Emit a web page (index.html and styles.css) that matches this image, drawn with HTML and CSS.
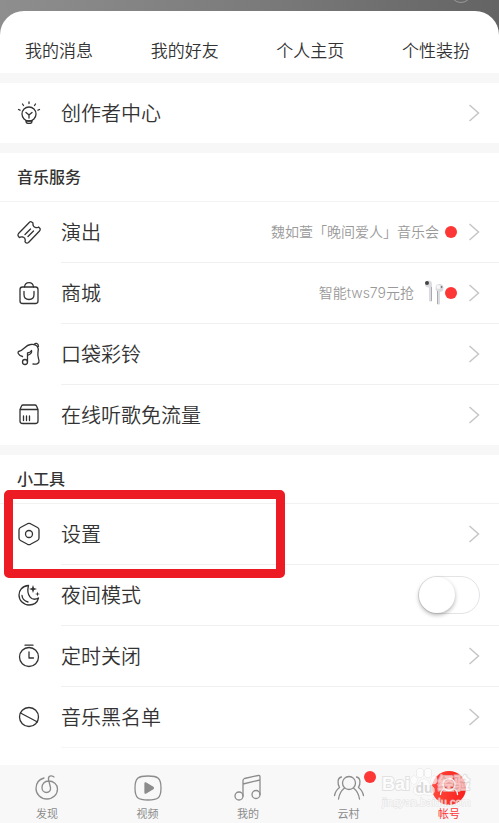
FILE: index.html
```html
<!DOCTYPE html>
<html lang="zh-CN">
<head>
<meta charset="utf-8">
<meta name="viewport" content="width=device-width, initial-scale=1">
<title>帐号</title>
<link rel="stylesheet" href="styles.css">
</head>
<body>
<svg width="0" height="0" class="defs" aria-hidden="true">
  <symbol id="chevron" viewBox="0 0 12 20"><path d="M1.500 2 10.500 10 1.500 18"/></symbol>
</svg>
<div class="screen">
  <span class="ring"></span>
  <main class="sheet">
    <nav class="tabs">
      <a href="#messages">我的消息</a>
      <a href="#friends">我的好友</a>
      <a href="#home">个人主页</a>
      <a href="#dress">个性装扮</a>
    </nav>

    <section class="group">
      <ul class="rows">
        <li class="row">
          <svg class="icon" viewBox="0 0 24 24"><circle cx="12" cy="14" r="7"/><path d="M9 20.500v1q0 2 3 2t3-2v-1M9 21h6M12 18v-3.500M9 12.500l3 2.500 3-2.500M12 2v1.500M5.500 4l1 1.500M18.500 4l-1 1.500M1.500 9.500l1.500.7M22.500 9.500l-1.500.7"/></svg>
          <a class="body" href="#creator"><span class="label">创作者中心</span><svg class="chevron"><use href="#chevron"/></svg></a>
        </li>
      </ul>
    </section>

    <section class="group">
      <h2>音乐服务</h2>
      <ul class="rows">
        <li class="row">
          <svg class="icon" viewBox="0 0 24 24"><path d="M1.500 13.500 12.500 2.200Q13.500 1 15 2.200L16 3Q15.500 6.500 18.500 7.500 21 8 21.500 7L23 8.500Q23.500 10 22.500 11L11.500 22.500Q10 23.700 8.500 22.500L8 21.500Q9 18 6 17 3.500 16.500 2.500 17.500L1.500 16.500Q.5 15 1.500 13.500ZM8 14.500l5.500-5.500M11 16.500l5.500-5.500"/></svg>
          <a class="body" href="#shows"><span class="label">演出</span><span class="note">魏如萱「晚间爱人」音乐会</span><i class="dot"></i><svg class="chevron"><use href="#chevron"/></svg></a>
        </li>
        <li class="row">
          <svg class="icon" viewBox="0 0 24 24"><rect x="3" y="6" width="18" height="16.500" rx="2.500"/><path d="M7.500 6Q8 1.700 12 1.700T16.500 6M7 10.500v3q0 5 5 5t5-5v-3"/></svg>
          <a class="body" href="#mall"><span class="label">商城</span><span class="note">智能tws79元抢</span>
            <svg class="pods" viewBox="0 0 20 26"><g fill="#dcdce0"><path d="M5 5h3v16q-1.500 1.500-3 0ZM13 9h3v15q-1.500 1.500-3 0Z"/><circle cx="4.500" cy="4" r="3.500"/><circle cx="15.500" cy="8" r="4"/></g><path fill="#aaaab0" d="M7 7h1v14H7ZM13 11h1v13h-1Z"/><circle cx="3" cy="3" r="2" fill="#444"/><circle cx="17.500" cy="7" r="1" fill="#777"/><circle cx="14.500" cy="7" r="2" fill="#f7f7f9"/></svg>
            <i class="dot"></i><svg class="chevron"><use href="#chevron"/></svg></a>
        </li>
        <li class="row">
          <svg class="icon" viewBox="0 0 24 24"><path d="M5.500 14.500C1 13.500.5 10 1.500 9.500 7 8.500 8 3 13.500 2.500 20 1.500 22 5.500 21 10c-.8 4 .5 6 1 8.500.5 3-2.500 4-6 3.500M17 2.500c1-2 4.500-1.500 4.500 2M10.500 19.500v-8.500q3-.5 4-2.500 1 3-4 5"/><circle cx="8" cy="20" r="2.500"/></svg>
          <a class="body" href="#ringtone"><span class="label">口袋彩铃</span><svg class="chevron"><use href="#chevron"/></svg></a>
        </li>
        <li class="row">
          <svg class="icon" viewBox="0 0 24 24"><path d="M3 7.500 4.500 4Q5 3 6 3h12q1 0 1.500 1L21 7.500v11.500q0 2.500-2.500 2.500h-13Q3 21.500 3 19ZM3 7.500h18M6.500 14v4.500M9.500 14v4.500M12.500 14v4.500"/></svg>
          <a class="body" href="#data"><span class="label">在线听歌免流量</span><svg class="chevron"><use href="#chevron"/></svg></a>
        </li>
      </ul>
    </section>

    <section class="group tools">
      <h2>小工具</h2>
      <ul class="rows">
        <li class="row marked">
          <svg class="icon" viewBox="0 0 24 24"><path d="M10.500 1.700Q12 1 13.500 1.700L20.500 5.500Q22 6.300 22 8v8q0 1.700-1.500 2.500l-7 3.800q-1.500.7-3 0l-7-3.800Q2 17.700 2 16V8q0-1.700 1.500-2.500Z"/><circle cx="12" cy="12" r="3.500"/></svg>
          <a class="body" href="#settings"><span class="label">设置</span><svg class="chevron"><use href="#chevron"/></svg></a>
        </li>
        <li class="row">
          <svg class="icon" viewBox="0 0 24 24"><path d="M11.500 2.500C5 3 2 7.500 2 12c0 5.500 4.500 10 10 10 5 0 8.500-3 9.500-7-7 4-12.500-3-10-12.500ZM5 12.500q.5 5 6 6.500"/><path class="solid" d="m16 2 1 3 3 1-3 1-1 3-1-3-3-1 3-1ZM20.500 8.500l.6 1.900 1.900.6-1.900.6-.6 1.900-.6-1.900-1.900-.6 1.900-.6Z"/></svg>
          <div class="body"><label class="label" for="night">夜间模式</label><input class="switch" type="checkbox" id="night"></div>
        </li>
        <li class="row">
          <svg class="icon" viewBox="0 0 24 24"><circle cx="12" cy="13" r="9.500"/><path d="M8 1.200h8M12 8v6h4.500"/></svg>
          <a class="body" href="#timer"><span class="label">定时关闭</span><svg class="chevron"><use href="#chevron"/></svg></a>
        </li>
        <li class="row">
          <svg class="icon" viewBox="0 0 24 24"><circle cx="12" cy="12" r="9.500"/><path d="m3.500 8 17 9"/></svg>
          <a class="body" href="#blacklist"><span class="label">音乐黑名单</span><svg class="chevron"><use href="#chevron"/></svg></a>
        </li>
      </ul>
    </section>
  </main>

  <nav class="bar">
    <a href="#discover"><svg viewBox="0 0 34 34"><path d="M14 7C8.500 8.500 6 13 6 17.500 6 23.500 11 28 17 28s10.500-4.500 10.500-10c0-4.500-4-8-9-8-4 0-6.500 3-6.500 6.500 0 3 2 5 4.500 5s4.500-2 4-5L18.500 8.500C18 5 21 4 24 6"/></svg>发现</a>
    <a href="#video"><svg viewBox="0 0 34 34"><path d="M17 5c10 0 13 2 13 12s-3 12-13 12S4 27 4 17 7 5 17 5Z"/><path class="fill" d="M14 12.500v9q0 1 1 .5l7-4.300q.8-.7 0-1.400L15 12q-1-.5-1 .5Z"/></svg>视频</a>
    <a href="#mine"><svg viewBox="0 0 34 34"><circle cx="8" cy="25" r="4"/><circle cx="25" cy="23.500" r="4"/><path d="M12 25V9.500Q12 8 13.500 7.500L27 4.500q2-.5 2 1.500v17.500M12 13l17-4"/></svg>我的</a>
    <a href="#village"><svg viewBox="0 0 34 34"><circle cx="17" cy="12" r="6.500"/><path d="M12.500 17q-5 4-6 11M21.500 17q5 4 6 11M9.500 6C5 7 5.500 13 7.500 16.500q-4 3-5 8M24.500 6c4.500 1 4 7 2 10.500q4 3 5 8"/></svg>云村<i class="dot"></i></a>
    <a href="#account" class="active"><svg viewBox="0 0 34 34"><defs><linearGradient id="red" x1="0" x2="1"><stop stop-color="#ff4a3c"/><stop offset="1" stop-color="#fa1e1c"/></linearGradient></defs><circle class="disc" cx="17" cy="17" r="17"/><circle class="line" cx="17" cy="13.500" r="6"/><path class="line" d="M12.500 17.500q-4 2-4 6M21.500 17.500q4 2 4 6"/></svg>帐号</a>
    <div class="watermark">
      <div class="brand"><span>Bai</span><svg viewBox="0 0 28 28"><ellipse cx="4" cy="12" rx="3" ry="4"/><ellipse cx="10" cy="5" rx="3.500" ry="4.500"/><ellipse cx="18" cy="5" rx="3.500" ry="4.500"/><ellipse cx="24" cy="12" rx="3" ry="4"/><path d="M14 11q3 0 5 4l5 5q2 6-4 7-6-1-12 0-6-1-4-7l5-5q2-4 5-4Z"/><text x="14" y="25" text-anchor="middle">du</text></svg><span class="cn">经验</span></div>
      <div class="domain">jingyan.baidu.com</div>
    </div>
  </nav>
</div>
</body>
</html>
```
FILE: styles.css
```css
*, *::before, *::after { box-sizing: border-box; }

body {
  margin: 0;
  color: #333;
  font-family: Inter, "Noto Sans CJK SC", sans-serif;
}

a { color: inherit; text-decoration: none; }
ul { margin: 0; padding: 0; list-style: none; }
.defs { position: absolute; }

.screen {
  position: relative;
  display: flex;
  flex-direction: column;
  min-height: 100vh;
  padding-top: 11px;
  background: linear-gradient(100deg, #8e8e8e, #7b7b7b 50%, #636363) no-repeat 0 0 / 100% 60px, #fff;
  overflow: hidden;
}

.ring {
  position: absolute;
  top: -19px;
  right: 27px;
  width: 22px;
  height: 22px;
  border: 1px solid #999;
  border-radius: 50%;
}

.sheet {
  position: relative;
  flex: 1;
  background: #fff;
  border-radius: 24px 24px 0 0;
}

.tabs {
  display: flex;
  justify-content: space-between;
  align-items: center;
  height: 62px;
  padding: 14px 29px 0 25px;
  font-size: 17px;
  font-weight: 350;
}

.group { border-top: 10px solid #f7f7f7; }

h2 {
  margin: 0;
  height: 49px;
  padding-left: 17px;
  border-bottom: 1px solid #f2f2f2;
  font-size: 16px;
  font-weight: 500;
  line-height: 49px;
}

.row {
  position: relative;
  display: flex;
  align-items: center;
  gap: 20px;
  padding-left: 17px;
}

.icon {
  width: 24px;
  height: 24px;
  margin-bottom: 2px;
  fill: none;
  stroke: #333;
  stroke-width: 1.3;
  stroke-linecap: round;
  stroke-linejoin: round;
}

.icon .solid { fill: #333; stroke: none; }

.body {
  flex: 1;
  display: flex;
  align-items: center;
  height: 61px;
  padding-right: 19px;
  border-bottom: 1px solid #f0f0f0;
}

.row:last-child .body { height: 60px; border-bottom: 0; }
.tools .row:last-child .body { height: 61px; border-bottom: 1px solid #f6f6f6; }

.label {
  margin-right: auto;
  padding-bottom: 2px;
  font-size: 20px;
  font-weight: 350;
}

.note {
  padding-bottom: 2px;
  color: #999;
  font-size: 14px;
  font-weight: 350;
}

.dot {
  width: 12px;
  height: 12px;
  margin-left: 6px;
  border-radius: 50%;
  background: #fd3636;
}

.pods { width: 20px; height: 26px; margin-left: 10px; }
.pods + .dot { margin-left: 1px; }

.chevron {
  width: 12px;
  height: 20px;
  margin-left: 11px;
  fill: none;
  stroke: #c6c6c6;
  stroke-width: 1.5;
}

.switch {
  appearance: none;
  width: 62px;
  height: 38px;
  margin: 0;
  border: 1px solid #e4e4e7;
  border-radius: 19px;
  background: #fff;
}

.switch::before {
  content: "";
  display: block;
  width: 36px;
  height: 36px;
  border-radius: 50%;
  background: #fff;
  box-shadow: 0 2px 4px rgba(0, 0, 0, .3);
}

.switch:checked { background: #fd3636; }
.switch:checked::before { margin-left: auto; }

.marked::after {
  content: "";
  position: absolute;
  top: -14px;
  left: 4px;
  width: 281px;
  height: 88px;
  border: 9px solid #ed1c24;
  border-radius: 5px;
  pointer-events: none;
}

.marked { z-index: 1; }

.bar {
  position: relative;
  display: flex;
  justify-content: space-between;
  height: 58px;
  padding: 6px 33px 0 30px;
  background: #f8f8f8;
  color: #8c8c8c;
  font-size: 11px;
  line-height: 16px;
  text-align: center;
}

.bar > a { position: relative; width: 34px; }

.bar > a > svg {
  display: block;
  width: 34px;
  height: 34px;
  margin-bottom: 1px;
  fill: none;
  stroke: #8c8c8c;
  stroke-width: 1.3;
  stroke-linecap: round;
}

.bar .fill { fill: #8c8c8c; }
.bar .disc { fill: url(#red); stroke: none; }
.bar .line { stroke: #fff; }
.bar .active { color: #fd3636; }
.bar .dot { position: absolute; top: 0; right: -10px; margin: 0; }

.watermark {
  position: absolute;
  right: 27px;
  bottom: 15px;
  width: 90px;
  color: #fff;
  font-family: "Liberation Sans", "Noto Sans CJK SC", sans-serif;
  text-align: left;
  white-space: nowrap;
  opacity: .7;
  pointer-events: none;
  -webkit-text-stroke: 2px #d8d8d8;
  paint-order: stroke fill;
}

.brand {
  display: flex;
  align-items: flex-end;
  height: 28px;
  font-size: 18px;
  font-weight: 700;
  line-height: 24px;
}

.brand svg {
  flex: none;
  width: 28px;
  height: 28px;
  fill: #fff;
  stroke: #d8d8d8;
  -webkit-text-stroke: 0;
}

.brand text { fill: #ccc; stroke: none; font-size: 14px; }
.brand .cn { font-size: 16px; }
.domain { font-size: 11px; line-height: 12px; -webkit-text-stroke-width: 1px; }
```
